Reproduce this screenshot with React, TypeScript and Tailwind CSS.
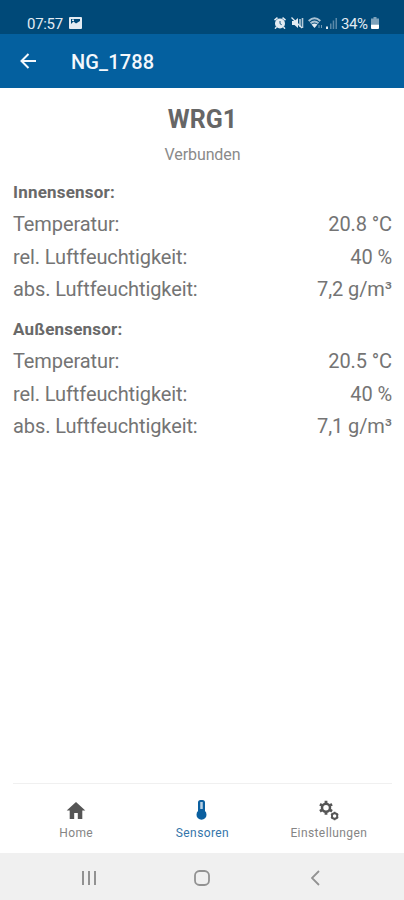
import React from "react";

type Reading = { label: string; value: string };

const inside: Reading[] = [
  { label: "Temperatur:", value: "20.8 °C" },
  { label: "rel. Luftfeuchtigkeit:", value: "40 %" },
  { label: "abs. Luftfeuchtigkeit:", value: "7,2 g/m³" },
];

const outside: Reading[] = [
  { label: "Temperatur:", value: "20.5 °C" },
  { label: "rel. Luftfeuchtigkeit:", value: "40 %" },
  { label: "abs. Luftfeuchtigkeit:", value: "7,1 g/m³" },
];

function StatusBar() {
  return (
    <div className="flex h-[34px] shrink-0 items-end justify-between bg-[#004978] pr-[25px] pl-[27px] text-[#e3ebf2]">
      <div className="flex h-[22px] items-center gap-[6px]">
        <span className="pt-px text-[15px] leading-[22px] tracking-[-0.3px]">07:57</span>
        <svg width="13" height="12" viewBox="0 0 13 12">
          <path fill="currentColor" fillRule="evenodd" d="M1 0h11a1 1 0 0 1 1 1v10a1 1 0 0 1-1 1H1a1 1 0 0 1-1-1V1a1 1 0 0 1 1-1zM2 2v5l2.500-2.500 2.500 2 4-2.500V2z" />
          <path fill="currentColor" d="M3 2.500h2v1.500H3z" />
        </svg>
      </div>
      <div className="flex h-[22px] items-center">
        <svg className="mr-[5px]" width="12" height="12" viewBox="0 0 12 12">
          <path d="M0 2.500 3 0l1 1.200L1 3.700zM12 2.500 9 0 8 1.200l3 2.500z" fill="currentColor" />
          <circle cx="6" cy="6.500" r="5" fill="currentColor" />
          <path d="M6 4v2.700l1.700 1" fill="none" stroke="#004978" strokeWidth=".9" />
          <path d="M2.500 10 1 11.700M9.500 10l1.500 1.700" stroke="currentColor" strokeWidth="1.400" />
        </svg>
        <svg className="mr-[4px]" width="13" height="12" viewBox="0 0 13 12">
          <path d="M1 4h2.500L7 1v10L3.500 8H1z" fill="currentColor" />
          <path d="M9 2v8M11.500 1v10" stroke="currentColor" strokeWidth="1.600" opacity=".8" />
          <path d="M.5.500 11 11" stroke="currentColor" strokeWidth="1.300" />
        </svg>
        <svg className="mr-[3px]" width="15" height="12" viewBox="0 0 15 12">
          <path d="M.7 4Q6.500-1.500 12.300 4M2.500 6.200q4-3.600 8 0" fill="none" stroke="currentColor" strokeWidth="1.900" opacity=".75" />
          <path d="m3.500 7.600 3 3.400 3-3.400Q6.500 5.400 3.500 7.600z" fill="currentColor" />
          <path d="M11 8v3M13.500 8v3" stroke="currentColor" strokeWidth="1" opacity=".5" />
        </svg>
        <svg className="mr-[4px]" width="11" height="12" viewBox="0 0 11 12">
          <path d="M0 9.500h2V12H0z" fill="currentColor" />
          <path d="M4 6.500h1.500V12H4zM6.700 3.500h1.500V12H6.700zM9.500 1H11v11H9.500z" fill="currentColor" opacity=".4" />
        </svg>
        <span className="w-[30px] pt-px text-[15px] leading-[22px] tracking-[-0.4px]">34%</span>
        <svg width="8" height="12" viewBox="0 0 8 12">
          <path d="M2.500 0h3v1.500H8v6H0v-6h2.500z" fill="currentColor" opacity=".55" />
          <path d="M0 7.500h8V11a1 1 0 0 1-1 1H1a1 1 0 0 1-1-1z" fill="#fff" />
        </svg>
      </div>
    </div>
  );
}

function Sensor({ title, rows }: { title: string; rows: Reading[] }) {
  return (
    <section className="mb-[6px]">
      <h2 className="h-[33px] text-[17px] leading-[35px] font-bold tracking-[0.2px] text-[#696969]">{title}</h2>
      {rows.map((row) => (
        <div key={row.label} className="flex h-[32.600px] items-center justify-between text-[20px] leading-[32px] tracking-[-0.1px] text-[#747474]">
          <span>{row.label}</span>
          <span>{row.value}</span>
        </div>
      ))}
    </section>
  );
}

export default function App() {
  return (
    <div className="flex h-[900px] w-[404px] flex-col overflow-hidden bg-white font-[Roboto,sans-serif]">
      <StatusBar />
      <header className="flex h-[54px] shrink-0 items-center bg-[#04609f] pl-[20px] text-[#f4f8fc]">
        <svg width="16" height="16" viewBox="0 0 16 16" fill="none" stroke="currentColor" strokeWidth="2">
          <path d="M16 8H1.500M8.500 1 1.500 8l7 7" />
        </svg>
        <h1 className="ml-[35px] pt-px text-[20px] font-medium tracking-[0.15px]">NG_1788</h1>
      </header>
      <main className="flex grow flex-col pr-[12px] pl-[13px]">
        <h1 className="mt-[15px] text-center text-[25px] leading-[34px] font-bold text-[#666]">WRG1</h1>
        <p className="mt-[8px] mb-[10px] text-center text-[16px] leading-[20px] tracking-[-0.1px] text-[#8a8a8a]">Verbunden</p>
        <Sensor title="Innensensor:" rows={inside} />
        <Sensor title="Außensensor:" rows={outside} />
      </main>
      <nav className="mr-[12px] ml-[13px] grid h-[70px] shrink-0 grid-cols-3 border-t border-[#f0f0f0] text-[12px] leading-[16px] tracking-[0.4px] text-[#858585]">
        <div className="flex flex-col items-center pt-[15px]">
          <svg width="24" height="24" viewBox="0 0 24 24" fill="#555">
            <path d="M12 3 2.700 11.500h3V20h4.500v-6h3.600v6h4.500v-8.500h3z" />
          </svg>
          <span className="mt-[2px]">Home</span>
        </div>
        <div className="flex flex-col items-center pt-[15px] text-[#3475aa]">
          <svg width="24" height="24" viewBox="0 0 24 24">
            <path fill="#0b60a0" d="M8 3.500Q8 1 10.500 1h2Q15 1 15 3.500v8.600a5 5 0 1 1-7 0z" />
            <path stroke="#b8d1e4" strokeWidth="2.500" d="M11.500 3v7" />
          </svg>
          <span className="mt-[2px]">Sensoren</span>
        </div>
        <div className="flex flex-col items-center pt-[15px]">
          <svg width="24" height="24" viewBox="0 0 24 24" fill="none" stroke="#555">
            <circle cx="9" cy="8.700" r="4" strokeWidth="2.500" />
            <path strokeWidth="2.800" d="M9 4V1.700M9 13.400v2.300M4.930 6.350l-2-1.150M13.070 6.350l2-1.150M4.930 11.050l-2 1.150M13.070 11.050l2 1.150" />
            <circle cx="17.600" cy="17" r="2.700" strokeWidth="1.900" />
            <path strokeWidth="1.600" d="M17.600 14v-1.200M17.600 20v1.200M15 15.500l-1-.6M20.200 15.500l1-.6M15 18.500l-1 .6M20.200 18.500l1 .6" />
          </svg>
          <span className="mt-[2px]">Einstellungen</span>
        </div>
      </nav>
      <div className="flex h-[47px] shrink-0 items-center bg-[#f0f0f0] pt-[3px] pl-[81px] text-[#929292]">
        <svg width="16" height="16" viewBox="0 0 16 16" stroke="currentColor" strokeWidth="2">
          <path d="M2 1v14M8 1v14M14 1v14" />
        </svg>
        <svg className="ml-[97px]" width="16" height="16" viewBox="0 0 16 16" fill="none" stroke="currentColor" strokeWidth="1.800">
          <rect x="1" y="1" width="14" height="14" rx="4.500" />
        </svg>
        <svg className="ml-[101px]" width="9" height="16" viewBox="0 0 9 16" fill="none" stroke="currentColor" strokeWidth="1.800">
          <path d="M8 1 1 8l7 7" />
        </svg>
      </div>
    </div>
  );
}
